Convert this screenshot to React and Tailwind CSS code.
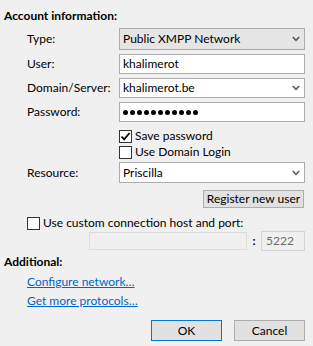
import React from 'react';

function Chevron() {
    return (
        <svg width="8" height="6" viewBox="0 0 8 6" className="shrink-0">
            <path d="M0.8 1 L4 4.4 L7.2 1" fill="none" stroke="#5a5a5a" strokeWidth="1.6" />
        </svg>
    );
}

function Combo({ value, className = '' }) {
    return (
        <div className={`flex items-center justify-between border border-[#acacac] pl-[3px] pr-[4px] ${className}`}>
            <span>{value}</span>
            <Chevron />
        </div>
    );
}

function CheckBox({ checked }) {
    return (
        <div className="w-[13px] h-[13px] border border-[#333333] bg-white flex items-center justify-center shrink-0">
            {checked && (
                <svg width="11" height="11" viewBox="0 0 11 11">
                    <path d="M1.5 5.5 L4.2 8.3 L9.5 2" fill="none" stroke="#000" strokeWidth="1.8" />
                </svg>
            )}
        </div>
    );
}

function Button({ children, primary, className = '' }) {
    return (
        <div
            className={`flex items-center justify-center bg-[#e1e1e1] border ${
                primary ? 'border-[#0078d7]' : 'border-[#adadad]'
            } ${className}`}>
            {children}
        </div>
    );
}

export default function App() {
    return (
        <div className="w-[313px] h-[346px] bg-[#f0f0f0] text-black text-[12px] leading-4 font-['Lato',sans-serif] pt-2 pl-1 pr-2">
            {/* Account */}
            <div className="font-bold h-4">Account information:</div>

            <div className="pl-[23px] mt-1 grid grid-cols-[92px_1fr] gap-y-1 items-center">
                <span>Type:</span>
                <Combo value="Public XMPP Network" className="h-[22px] bg-[#e5e5e5]" />

                <span>User:</span>
                <div className="h-5 bg-white border border-[#abadb3] pl-[3px] flex items-center">khalimerot</div>

                <span>Domain/Server:</span>
                <Combo value="khalimerot.be" className="h-5 bg-white" />

                <span>Password:</span>
                <div className="h-5 bg-white border border-[#abadb3] pl-[3px] flex items-center gap-[2px]">
                    {Array.from({ length: 11 }).map((_, i) => (
                        <span key={i} className="w-[5px] h-[5px] rounded-full bg-black" />
                    ))}
                </div>
            </div>

            <div className="pl-[115px] mt-[6px]">
                <div className="h-4 flex items-center gap-[3px]">
                    <CheckBox checked />
                    <span>Save password</span>
                </div>
                <div className="h-4 flex items-center gap-[3px]">
                    <CheckBox />
                    <span>Use Domain Login</span>
                </div>
            </div>

            <div className="pl-[23px] mt-[2px] grid grid-cols-[92px_1fr] items-center">
                <span>Resource:</span>
                <Combo value="Priscilla" className="h-[21px] bg-white" />
            </div>

            <div className="mt-[7px] flex justify-end">
                <Button className="w-[101px] h-[18px] mr-px">Register new user</Button>
            </div>

            <div className="pl-[23px] mt-[7px] h-4 flex items-center gap-[3px]">
                <CheckBox />
                <span>Use custom connection host and port:</span>
            </div>

            <div className="pl-[85px] h-5 flex items-center">
                <div className="w-[158px] h-[18px] border border-[#dcdcdc] bg-[#f0f0f0]" />
                <span className="w-[14px] text-center font-bold">:</span>
                <div className="flex-1 h-5 border border-[#d5d5d5] bg-[#f0f0f0] pl-[4px] flex items-center text-[#6d6d6d]">
                    5222
                </div>
            </div>

            {/* Additional */}
            <div className="mt-[3px] font-bold h-4">Additional:</div>
            <div className="pl-[23px] mt-1 flex flex-col items-start gap-[3px] text-[#0066cc]">
                <span className="underline">Configure network…</span>
                <span className="underline">Get more protocols…</span>
            </div>

            <div className="mt-[11px] flex justify-end gap-3">
                <Button primary className="w-[71px] h-[21px]">OK</Button>
                <Button className="w-[71px] h-[21px]">Cancel</Button>
            </div>
        </div>
    );
}
